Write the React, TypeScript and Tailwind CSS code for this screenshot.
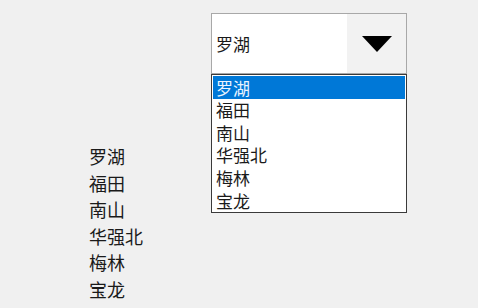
import React from "react";

const AREAS = ["罗湖", "福田", "南山", "华强北", "梅林", "宝龙"];

export default function App() {
  const selected = "罗湖";
  return (
    <div
      className="w-[478px] h-[308px] bg-[#f0f0f0] flex overflow-hidden text-[#1a1a1a]"
      style={{ fontFamily: '"Noto Sans CJK SC", "Noto Sans", sans-serif' }}
    >
      {/* plain list on the left */}
      <div className="w-[211px] shrink-0 pl-[89px] pt-[143px]">
        {AREAS.map((a) => (
          <div key={a} className="text-[18px] leading-[26.6px]">
            {a}
          </div>
        ))}
      </div>

      {/* open combo box */}
      <div className="pt-[13px]">
        <div className="w-[196px] h-[61px] flex border border-[#a8a8a8] bg-white">
          <div className="flex-1 flex items-center pl-[4px] text-[17px]">{selected}</div>
          <div className="w-[59px] bg-[#f2f2f2] flex items-center justify-center">
            <svg width="30" height="16" viewBox="0 0 30 16">
              <polygon points="0,0 30,0 15,16" fill="#000" />
            </svg>
          </div>
        </div>
        <div className="w-[196px] h-[139px] border border-[#3a3a3a] bg-white pt-[1px] px-[1px] overflow-hidden">
          {AREAS.map((a) => (
            <div
              key={a}
              className={`h-[22.6px] flex items-center pl-[3px] text-[17px] ${
                a === selected ? "bg-[#0078d7] text-[#eaf4ff]" : ""
              }`}
            >
              {a}
            </div>
          ))}
        </div>
      </div>
    </div>
  );
}
